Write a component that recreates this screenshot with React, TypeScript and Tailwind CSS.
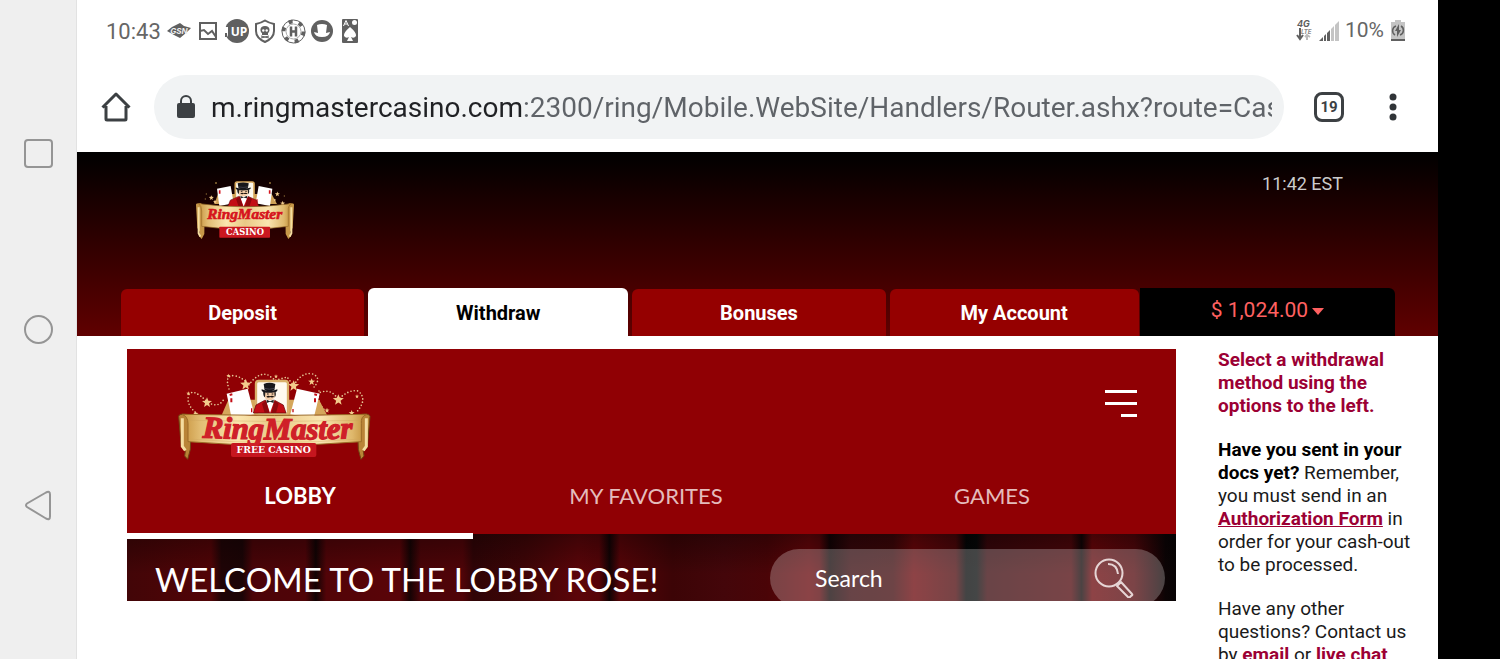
import React, { useState } from 'react';

const TABS = [
  { name: 'Deposit', grow: 'grow-[243]' },
  { name: 'Withdraw', grow: 'grow-[260]' },
  { name: 'Bonuses', grow: 'grow-[253]' },
  { name: 'My Account', grow: 'grow-[249]' }
];

const LOBBY_TABS = ['LOBBY', 'MY FAVORITES', 'GAMES'];

const Star: React.FC<{ x: number; y: number; s?: number }> = ({ x, y, s = 1 }) => (
  <path
    transform={`translate(${x} ${y}) scale(${s})`}
    d="M0-15 4-5 15-4 6 3 9 14 0 8-9 14-6 3-15-4-4-5Z"
    fill="#f3cb8c"
  />
);

// Top hat, moustache and red tailcoat, drawn inside a 120x100 box
const Ringmaster = () => (
  <g>
    <path d="M10 92 18 68 44 54h30l26 14 8 24Z" fill="#c30d16" stroke="#5d0508" strokeWidth="2" />
    <path d="M47 52 60 92 74 52Z" fill="#fff" />
    <path d="M48 54 58 92H44L36 64ZM74 54 64 92h14l8-28Z" fill="#8e070d" />
    <path d="M50 52 60 57 71 52v10l-11-4-10 4Z" fill="#222" />
    <path d="M43 28h33l-2 17q-6 9-15 9-12 0-15-10Z" fill="#f3cda7" />
    <path d="M40 25q-2 15 5 20l1-15ZM76 26q4 13-2 19l-1-14Z" fill="#222" />
    <path d="M49 43q6-5 11-1 6-4 13 1-6 4-13 1-5 4-11-1Z" fill="#1c1510" />
    <path d="M51 35h5M65 35h5" stroke="#1c1510" strokeWidth="3" />
    <path d="M41 5q17-7 35 0l-3 19q-16 6-29 0Z" fill="#17171b" />
    <path d="M35 21q24 10 47 0 2 7-8 9-18 3-32 0-9-3-7-9Z" fill="#17171b" />
    <path d="M43 18q15 5 31 0" stroke="#545462" strokeWidth="2" fill="none" />
  </g>
);

const Gold: React.FC<{ id: string }> = ({ id }) => (
  <defs>
    <linearGradient id={id} x1="0" x2="1" y1="0" y2="0">
      <stop offset="0" stopColor="#c9953f" />
      <stop offset=".1" stopColor="#e2bd74" />
      <stop offset=".3" stopColor="#fbe6ae" />
      <stop offset=".5" stopColor="#e9c986" />
      <stop offset=".75" stopColor="#fae5b0" />
      <stop offset=".92" stopColor="#dfb86c" />
      <stop offset="1" stopColor="#c08c36" />
    </linearGradient>
  </defs>
);

const CasinoLogo = () => (
  <svg width="130" height="80" viewBox="0 0 390 240" role="img" aria-label="RingMaster Casino">
    <Gold id="gold-small" />
    <path d="M103 102 114 72 275 72 291 102Z" fill="#cfa057" />
    <rect x="166" y="36" width="56" height="64" rx="5" fill="#fdf8ec" stroke="#d6a75b" strokeWidth="5" />
    <path d="M111 56 152 48 161 100 118 108Z" fill="#fff" />
    <path d="M236 48 277 56 270 108 227 100Z" fill="#fff" />
    <path d="M119 61v10M269 61v10" stroke="#d4141c" strokeWidth="5" />
    <path d="M156 90v8M231 88v10" stroke="#d4141c" strokeWidth="4" />
    <g transform="translate(134 36) scale(.95 .8)">
      <Ringmaster />
    </g>
    <Star x={94} y={83} s={0.5} />
    <Star x={105} y={95} s={0.4} />
    <Star x={292} y={72} s={0.5} />
    <Star x={284} y={90} s={0.3} />
    <Star x={308} y={100} s={0.5} />
    <g fill="#8d6c35">
      <circle cx="108" cy="39" r="3" />
      <circle cx="79" cy="72" r="2" />
      <circle cx="270" cy="39" r="3" />
      <circle cx="76" cy="87" r="2" />
      <circle cx="313" cy="78" r="2" />
    </g>
    <path d="M48 104q0-5 15-4l11 12-1 80-8 15-8-9 3-12-8-12ZM342 104q0-5-15-4l-11 12 1 80 8 15 8-9-3-12 8-12Z" fill="#c79748" />
    <path d="M56 101Q195 120 334 101q-11 7-9 22v46Q195 187 65 169v-46q0-15-9-22Z" fill="url(#gold-small)" stroke="#9a6c28" strokeWidth="2" />
    <path d="M56 112v78l5 10M334 112v78l-5 10" stroke="#f5dda0" strokeWidth="6" fill="none" />
    <rect x="118" y="170" width="152" height="33" rx="2" fill="#ca1820" />
    <text x="194" y="148" textAnchor="middle" fill="#d6141d" stroke="#d6141d" strokeWidth="2" className="font-['Liberation_Serif',serif] text-[46px] font-bold italic">RingMaster</text>
    <text x="195" y="196" textAnchor="middle" fill="#fff" className="font-['DejaVu_Serif',serif] text-[25px] font-bold">CASINO</text>
  </svg>
);

const FreeCasinoLogo = () => (
  <svg width="220" height="100" viewBox="0 0 660 300" role="img" aria-label="RingMaster Free Casino">
    <Gold id="gold-large" />
    <g fill="none" stroke="#e6c796" strokeWidth="5" strokeLinecap="round" strokeDasharray="0 10">
      <path d="M98 148Q60 118 72 88 86 70 126 110 158 132 176 104" />
      <path d="M192 72Q178 30 206 32 236 36 250 62 276 24 306 28L332 46" />
      <path d="M332 46 366 36 386 62Q408 22 440 26 476 38 440 74" />
      <path d="M462 78Q452 110 482 138M466 82Q500 70 520 104 550 72 580 78 610 104 572 144" />
    </g>
    <Star x={126} y={112} />
    <Star x={242} y={58} s={1.1} />
    <Star x={386} y={62} s={1.1} />
    <Star x={440} y={50} s={0.7} />
    <Star x={520} y={104} s={1.1} />
    <Star x={92} y={146} s={0.5} />
    <Star x={190} y={32} s={0.4} />
    <Star x={70} y={85} s={0.4} />
    <Star x={333} y={34} s={0.4} />
    <Star x={576} y={94} s={0.4} />
    <Star x={560} y={144} s={0.6} />
    <Star x={486} y={136} s={0.5} />
    <path d="M170 150 190 104 462 104 486 150Z" fill="#d5a65b" />
    <rect x="273" y="48" width="96" height="100" rx="8" fill="#fffaf0" stroke="#d9b06b" strokeWidth="7" />
    <path d="M185 86 248 71 268 148 200 160Z" fill="#fff" />
    <path d="M396 71 464 86 446 160 376 148Z" fill="#fff" />
    <path d="M194 90l8-2M199 100v12M448 88l8 2M450 100v12" stroke="#c40d16" strokeWidth="6" />
    <path d="M260 130v12M384 132v10" stroke="#c40d16" strokeWidth="4" />
    <g transform="translate(255 52)">
      <Ringmaster />
    </g>
    <path d="M41 154q2-9 24-6l14 15-3 90-8 30-9-10 2-14-12-12ZM615 154q-2-9-24-6l-14 15 3 90 8 30 9-10-2-14 12-12Z" fill="#b98437" stroke="#714513" strokeWidth="3" />
    <path d="M51 148Q328 155 606 148q-20 6-17 28v54Q328 251 69 230v-54q0-22-18-28Z" fill="url(#gold-large)" stroke="#9b6a26" strokeWidth="3" />
    <path d="M52 160v84l9 12M604 160v84l-9 12" stroke="#f5dda0" strokeWidth="9" fill="none" />
    <path d="M70 166Q330 173 588 166M72 222Q330 243 586 222" stroke="#caa15a" strokeWidth="1" fill="none" />
    <rect x="198" y="234" width="256" height="42" rx="6" fill="#c6161f" />
    <path id="ribbon-curve" d="M90 216Q330 228 586 219" fill="none" />
    <text fill="#cf2028" stroke="#cf2028" strokeWidth="4" className="font-['Liberation_Serif',serif] text-[92px] font-bold italic">
      <textPath href="#ribbon-curve" startOffset="50%" textAnchor="middle">RingMaster</textPath>
    </text>
    <text x="326" y="265" textAnchor="middle" fill="#fff" className="font-['DejaVu_Serif',serif] text-[28px] font-bold">FREE CASINO</text>
  </svg>
);

const NotificationIcons = () => (
  <div className="flex items-center text-[#606060]">
    <svg className="ml-[6px]" width="24" height="24" viewBox="0 0 24 24">
      <path d="M0 12 5 8l8-4 4 3 7 2-5 5-6 5-6-3Z" fill="currentColor" />
      <text x="12" y="15" textAnchor="middle" fill="#eee" className="font-['Inter',sans-serif] text-[8px] font-bold italic">GSN</text>
    </svg>
    <svg className="ml-[7px]" width="20" height="20" viewBox="0 0 20 20" fill="none" stroke="currentColor" strokeWidth="2">
      <rect x="2" y="2" width="16" height="16" />
      <path d="m2 10 4-1 4 4 4-3 4 6" />
    </svg>
    <svg className="ml-[6px]" width="25" height="24" viewBox="0 0 25 24">
      <circle cx="13" cy="12" r="12" fill="currentColor" />
      <path d="M0 8h4v7q0 4-4 4Z" fill="#fff" />
      <path d="M2 14v4" stroke="currentColor" strokeWidth="2" />
      <text x="15" y="17" textAnchor="middle" fill="#fff" className="font-['Open_Sans',sans-serif] text-[12px] font-bold">UP</text>
    </svg>
    <svg className="ml-[5px]" width="22" height="24" viewBox="0 0 22 24">
      <path d="M11 1.500Q15 4 20 5v7q0 7-9 11Q2 19 2 12V5q5-1 9-3.500Z" fill="none" stroke="currentColor" strokeWidth="2" />
      <path d="M11 7c-6 0-5 6-3 7v2h6v-2c2-1 3-7-3-7Z" fill="currentColor" />
      <circle cx="9.300" cy="11.500" r="1.200" fill="#fff" />
      <circle cx="12.700" cy="11.500" r="1.200" fill="#fff" />
      <path d="m7 17 8 2M15 17 7 19" stroke="currentColor" />
    </svg>
    <svg className="ml-[5px]" width="25" height="25" viewBox="0 0 25 25">
      <circle cx="12.500" cy="12.500" r="11.500" fill="none" stroke="currentColor" strokeWidth="1" />
      <circle cx="12.500" cy="12.500" r="10" fill="none" stroke="currentColor" strokeWidth="4" strokeDasharray="4 6.470" />
      <circle cx="12.500" cy="12.500" r="7.500" fill="#fff" stroke="#aaa" strokeWidth="1" />
      <path d="M10 7.500v10M15 7.500v10M10 12.500h5" stroke="currentColor" strokeWidth="2.500" />
    </svg>
    <svg className="ml-[5px]" width="22" height="22" viewBox="0 0 22 22">
      <circle cx="11" cy="11" r="11" fill="currentColor" />
      <path d="M6 5q5-2 10 0l-1 8 4-1q-1 5-8 5t-8-5l4 1Z" fill="#fff" />
    </svg>
    <svg className="ml-[8px]" width="18" height="24" viewBox="0 0 18 24">
      <rect x="1" y="0" width="16" height="24" rx="1" fill="currentColor" />
      <path d="M9 8q-7 6-6 9 2 3 5 1l-2 4h6l-2-4q3 2 5-1 1-3-6-9Z" fill="#fff" />
      <path d="M2.500 7 5 1.500 7.500 7M3.500 5h3" fill="none" stroke="#fff" />
      <circle cx="13.500" cy="3.500" r="2.500" fill="#fff" />
    </svg>
  </div>
);

const StatusBar = () => (
  <div className="flex h-[62px] items-center pl-[29px] pr-[33px] text-[22px] text-[#666]">
    <span>10:43</span>
    <NotificationIcons />
    <div className="ml-auto flex items-center">
      <svg width="16" height="24" viewBox="0 0 16 24">
        <text x="1" y="8" fill="#606060" className="font-['Inter',sans-serif] text-[9px] font-bold italic">4G</text>
        <text x="5" y="15" fill="#888" className="font-['Inter',sans-serif] text-[6px] font-bold italic">LTE</text>
        <path d="M4 9v10M1 16l3 4 3-4" fill="none" stroke="#606060" strokeWidth="2" />
        <path d="M11 21v-4M9 18l2-2 3 2" fill="none" stroke="#bbb" strokeWidth="2" />
      </svg>
      <svg className="ml-[7px]" width="21" height="22" viewBox="0 0 21 22">
        <path d="M0 21 4 17v4ZM5 16l2-2v7H5ZM8 13l3-3v11H8Z" fill="#606060" />
        <path d="m12 9 3-3v15h-3ZM16 5l4-4v20h-4Z" fill="#c4c4c4" />
      </svg>
      <span className="ml-[5px] text-[21px]">10%</span>
      <svg className="ml-[7px]" width="14" height="22" viewBox="0 0 14 22">
        <path d="M4 0h6v2h4v17H0V2h4Z" fill="#c4c4c4" />
        <path d="M0 19h14v2H0Z" fill="#606060" />
        <path d="M5 6a5 5 0 0 0-1 9M9 15a5 5 0 0 0 1-9" fill="none" stroke="#606060" strokeWidth="1.500" />
        <path d="M8 4 4 11h2v6l4-7H8Z" fill="#606060" />
      </svg>
    </div>
  </div>
);

const AddressBar = () => {
  const [url, setUrl] = useState('m.ringmastercasino.com:2300/ring/Mobile.WebSite/Handlers/Router.ashx?route=Cas');

  return (
    <div className="flex items-center pb-[13px] pl-[23px] pr-[33px] pt-[13px]">
      <button type="button" aria-label="Home" className="shrink-0">
        <svg width="32" height="32" viewBox="0 0 32 32" fill="none" stroke="#3c4043" strokeWidth="3" strokeLinejoin="round">
          <path d="M2.500 16.500 16 3l13.500 13.500M6 15v13q0 1 1 1h18q1 0 1-1V15" />
        </svg>
      </button>
      <div className="ml-[22px] flex h-[64px] min-w-0 flex-1 items-center rounded-full bg-[#f1f3f4] pl-[23px] pr-[12px]">
        <svg className="shrink-0" width="18" height="24" viewBox="0 0 18 24">
          <path d="M4 9V6a5 5 0 0 1 10 0v3" fill="none" stroke="#3c4043" strokeWidth="2" />
          <rect x="0" y="8" width="18" height="15" rx="2" fill="#3c4043" />
        </svg>
        {/* Host part of the address is darker than the rest */}
        <input
          type="text"
          aria-label="Web address"
          value={url}
          onChange={(e) => setUrl(e.target.value)}
          className="ml-[16px] min-w-0 flex-1 bg-[linear-gradient(to_right,#202124_312px,#5f6368_312px)] bg-clip-text pt-[2px] text-[28px] text-[#5f6368] outline-none [-webkit-text-fill-color:transparent]"
        />
      </div>
      <button type="button" aria-label="Open tabs" className="ml-[30px] flex h-[30px] w-[30px] shrink-0 items-center justify-center rounded-[8px] border-3 border-[#3c4043] text-[15px] font-bold text-[#3c4043]">
        19
      </button>
      <button type="button" aria-label="More options" className="ml-[37px] shrink-0">
        <svg width="24" height="30" viewBox="0 0 24 30" fill="#303438">
          <circle cx="12" cy="5" r="3.500" />
          <circle cx="12" cy="15" r="3.500" />
          <circle cx="12" cy="25" r="3.500" />
        </svg>
      </button>
    </div>
  );
};

const CashierHeader = () => {
  const [tab, setTab] = useState('Withdraw');

  return (
    <header className="bg-[linear-gradient(to_bottom,#000,#600000)] pt-[18px]">
      <div className="flex items-start justify-between pl-[103px] pr-[95px]">
        <CasinoLogo />
        <span className="text-[18px] text-[#ccc]">11:42 EST</span>
      </div>
      <nav className="mt-[38px] flex items-end pl-[44px] pr-[43px]">
        {TABS.map((item) => (
          <button
            key={item.name}
            type="button"
            onClick={() => setTab(item.name)}
            className={`mr-[4px] basis-0 rounded-t-[6px] text-[20px] font-bold ${item.grow} ${
              item.name === tab ? 'h-[48px] bg-white pt-[1px] text-black' : 'h-[47px] bg-[#950000] text-white'
            }`}
          >
            {item.name}
          </button>
        ))}
        <button type="button" className="-ml-[3px] flex h-[48px] grow-[255] basis-0 items-center justify-center gap-[4px] rounded-tr-[6px] bg-black pb-[2px] text-[21px] text-[#ff6060]">
          $ 1,024.00
          <svg width="12" height="7" viewBox="0 0 12 7" fill="currentColor">
            <path d="M0 0h12L6 7Z" />
          </svg>
        </button>
      </nav>
    </header>
  );
};

const LobbyCard = () => {
  const [active, setActive] = useState('LOBBY');

  return (
    <section className="mt-[1px] min-w-0 flex-1 self-start bg-[#900004] font-['Lato',sans-serif] text-white">
      <div className="flex items-start justify-between pl-[38px] pr-[39px] pt-[16px]">
        <FreeCasinoLogo />
        <button type="button" aria-label="Menu" className="mt-[25px] flex w-[32px] flex-col items-end gap-[9px]">
          <span className="h-[3px] w-full bg-white" />
          <span className="h-[3px] w-full bg-white" />
          <span className="h-[3px] w-1/2 bg-white" />
        </button>
      </div>
      <nav className="relative z-10 grid grid-cols-3 pr-[11px]">
        {LOBBY_TABS.map((name) => (
          <button
            key={name}
            type="button"
            onClick={() => setActive(name)}
            className={`-mb-[5px] h-[74px] border-b-6 pb-[8px] text-[22px] ${
              name === active ? 'border-white font-bold' : 'border-transparent text-[#e4bcbc]'
            }`}
          >
            {name}
          </button>
        ))}
      </nav>
      {/* Stage curtain */}
      <div className="flex h-[67px] items-start justify-between overflow-hidden bg-[linear-gradient(to_bottom,#0005,#0000_60%),linear-gradient(to_right,#420507_0%,#520407_8%,#200406_9%,#1c0406_11%,#4c0408_12%,#500408_17%,#120304_18%,#520408_19%,#5a0408_26%,#160304_27%,#4c0408_28%,#500408_32%,#300406_33%,#400507_38%,#5c0509_43%,#560408_45%,#120304_46%,#580408_47%,#3c0406_52%,#44060a_57%,#4a0407_61%,#640509_65%,#580509_66%,#120304_67%,#36060a_69%,#3c0608_73%,#680509_75%,#4a0609_79%,#040606_80%,#060808_81%,#38060a_82%,#4c060a_90%,#100405_91%,#680509_92%,#50060a_96%,#0c0405_99%,#080304_100%)] pl-[28px] pr-[11px]">
        <h1 className="pt-[23px] text-[33px] leading-[44px]">WELCOME TO THE LOBBY ROSE!</h1>
        <form
          onSubmit={(e) => e.preventDefault()}
          className="mt-[15px] flex h-[58px] w-[395px] items-center rounded-full bg-white/25 pl-[45px] pr-[31px]"
        >
          <input
            type="search"
            aria-label="Search games"
            placeholder="Search"
            className="min-w-0 flex-1 bg-transparent text-[23px] text-white outline-none placeholder:text-white"
          />
          <button type="submit" aria-label="Search">
            <svg width="40" height="40" viewBox="0 0 40 40" fill="none" stroke="#e6d5d5" strokeWidth="2">
              <circle cx="15" cy="15" r="13.500" />
              <path d="M14 6q9 0 10 10" />
              <path d="m23 28 4-4 11 12q1 1-1 2l-1 1q-1 1-2 0Z" strokeLinejoin="round" />
            </svg>
          </button>
        </form>
      </div>
    </section>
  );
};

const WithdrawHelp = () => (
  <aside className="w-[204px] shrink-0 text-[19px] leading-[23px] text-[#1a1a1a]">
    <p className="font-bold text-[#9c0034]">Select a withdrawal method using the options to the left.</p>
    <p className="mt-[21px]">
      <b className="text-black">Have you sent in your docs yet?</b> Remember, you must send in an{' '}
      <a href="#form" className="font-bold text-[#9c0034] underline">Authorization Form</a> in order for your cash-out to be processed.
    </p>
    <p className="mt-[21px]">
      Have any other questions? Contact us by{' '}
      <a href="#email" className="font-bold text-[#9c0034] underline">email</a> or{' '}
      <a href="#chat" className="font-bold text-[#9c0034] underline">live chat</a>.
    </p>
  </aside>
);

const SystemNav = () => (
  <nav className="flex w-[77px] shrink-0 flex-col items-center gap-[144px] border-r border-[#e2e2e2] bg-[#efefef] pt-[138px]">
    <button type="button" aria-label="Recent apps">
      <svg width="32" height="32" viewBox="0 0 32 32" fill="none" stroke="#959595" strokeWidth="2">
        <rect x="3" y="2" width="27" height="27" rx="3" />
      </svg>
    </button>
    <button type="button" aria-label="Home screen">
      <svg width="32" height="32" viewBox="0 0 32 32" fill="none" stroke="#959595" strokeWidth="2">
        <circle cx="16.500" cy="15.500" r="13.500" />
      </svg>
    </button>
    <button type="button" aria-label="Back">
      <svg width="32" height="32" viewBox="0 0 32 32" fill="none" stroke="#959595" strokeWidth="2" strokeLinejoin="round">
        <path d="M5 13.500 24 2.500q4-2 4 2v22q0 4-4 2L5 17q-2-2 0-3.500Z" />
      </svg>
    </button>
  </nav>
);

const App: React.FC = () => {
  return (
    <div className="flex h-screen overflow-hidden bg-white font-['Roboto',sans-serif]">
      <SystemNav />
      <main className="min-w-0 flex-1">
        <StatusBar />
        <AddressBar />
        <CashierHeader />
        <div className="flex gap-[42px] pl-[50px] pr-[16px] pt-[12px]">
          <LobbyCard />
          <WithdrawHelp />
        </div>
      </main>
      <div className="w-[62px] shrink-0 bg-black" />
    </div>
  );
};

export default App;
